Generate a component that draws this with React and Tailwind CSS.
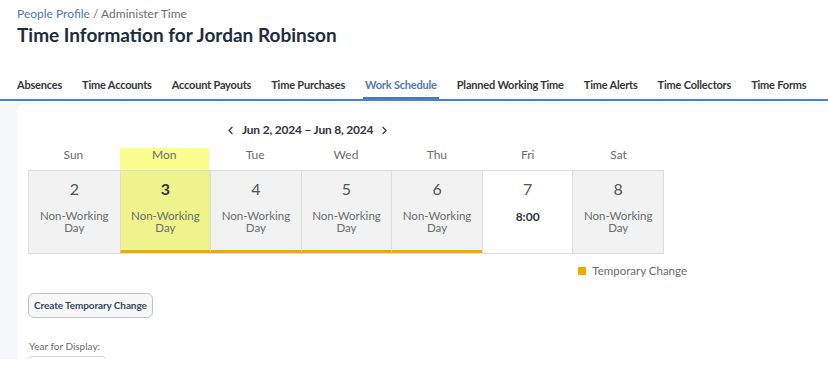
import { ChevronLeft, ChevronRight } from "lucide-react";

const tabs = [
  "Absences",
  "Time Accounts",
  "Account Payouts",
  "Time Purchases",
  "Work Schedule",
  "Planned Working Time",
  "Time Alerts",
  "Time Collectors",
  "Time Forms",
];

const days = [
  { name: "Sun", num: 2 },
  { name: "Mon", num: 3, today: true, temp: true },
  { name: "Tue", num: 4, temp: true },
  { name: "Wed", num: 5, temp: true },
  { name: "Thu", num: 6, temp: true },
  { name: "Fri", num: 7, hours: "8:00" },
  { name: "Sat", num: 8 },
];

export default function App() {
  return (
    <div className="w-[828px] h-[368px] overflow-hidden bg-white font-['Lato',sans-serif] text-[#32363a]">
      {/* header */}
      <div className="px-[17px] pt-[6px]">
        <div className="text-[12px] leading-[15px]">
          <span className="text-[#4f79b4]">People Profile</span>
          <span className="text-[#6a6d70]"> / Administer Time</span>
        </div>
        <h1 className="mt-[2px] text-[19px] leading-[24px] font-bold text-[#1d2d3e]">
          Time Information for Jordan Robinson
        </h1>
        <div className="mt-[31px] flex gap-[20px] text-[11px] leading-[14px] font-bold tracking-[-0.2px] whitespace-nowrap">
          {tabs.map((t) => (
            <div
              key={t}
              className={
                t === "Work Schedule"
                  ? "pb-[5px] px-[2px] -mx-[2px] text-[#4f79b4] border-b-2 border-[#4f79b4]"
                  : "pb-[7px]"
              }
            >
              {t}
            </div>
          ))}
        </div>
      </div>
      <div className="h-[2px] bg-[#4a84c8]" />

      {/* content */}
      <div className="bg-[#f5f6f7] pl-[17px] pt-[3px] h-[258px] overflow-hidden">
        <div className="bg-white rounded-tl-[8px] h-full pl-[11px] pt-[18px]">
          <div className="w-[636px]">
            <div className="h-[16px] pl-[196px] flex items-center gap-[5px] text-[12px] font-bold tracking-[-0.2px]">
              <ChevronLeft size={13} strokeWidth={2} className="text-[#32363a]" />
              <span>Jun 2, 2024 – Jun 8, 2024</span>
              <ChevronRight size={13} strokeWidth={2} className="text-[#32363a]" />
            </div>

            <div className="mt-[10px] grid grid-cols-7">
              {days.map((d) => (
                <div
                  key={d.name}
                  className={
                    "h-[22px] text-center text-[12px] leading-[14px] text-[#6a6d70] " +
                    (d.today ? "bg-[#fafe8e] mx-[1px]" : "")
                  }
                >
                  {d.name}
                </div>
              ))}
            </div>

            <div className="grid grid-cols-7 border border-[#dcdcdc]">
              {days.map((d, i) => (
                <div
                  key={d.name}
                  className={
                    "h-[82px] flex flex-col items-center pt-[8px] text-center " +
                    (i > 0 ? "border-l border-[#dcdcdc] " : "") +
                    (d.today ? "bg-[#eef48b] " : d.hours ? "bg-white " : "bg-[#f2f2f2] ") +
                    (d.temp ? "border-b-[3px] border-b-[#f0ab00]" : "")
                  }
                >
                  <div
                    className={
                      "text-[16px] leading-[20px] " +
                      (d.today ? "font-bold text-[#32363a]" : "text-[#555]")
                    }
                  >
                    {d.num}
                  </div>
                  {d.hours ? (
                    <div className="mt-[11px] text-[12px] leading-[14px] font-bold text-[#32363a]">
                      {d.hours}
                    </div>
                  ) : (
                    <div className="mt-[11px] text-[11.5px] leading-[12px] text-[#6a6d70]">
                      Non-Working
                      <br />
                      Day
                    </div>
                  )}
                </div>
              ))}
            </div>
          </div>

          <div className="w-[659px] mt-[10px] h-[14px] flex justify-end items-center gap-[6px] text-[11.5px] text-[#6a6d70]">
            <span className="w-[8px] h-[8px] bg-[#f0ab00]" />
            <span>Temporary Change</span>
          </div>

          <button className="mt-[15px] h-[25px] px-[5px] rounded-[6px] border border-[#bcc3ca] bg-[#f7f7f7] text-[10px] font-bold tracking-[-0.1px] text-[#354a5f]">
            Create Temporary Change
          </button>

          <div className="mt-[21px] text-[10px] leading-[14px] text-[#6a6d70] pl-[1px]">Year for Display:</div>
          <div className="mt-[3px] w-[78px] h-[26px] border border-[#d5dadd] rounded-[4px]" />
        </div>
      </div>
    </div>
  );
}
